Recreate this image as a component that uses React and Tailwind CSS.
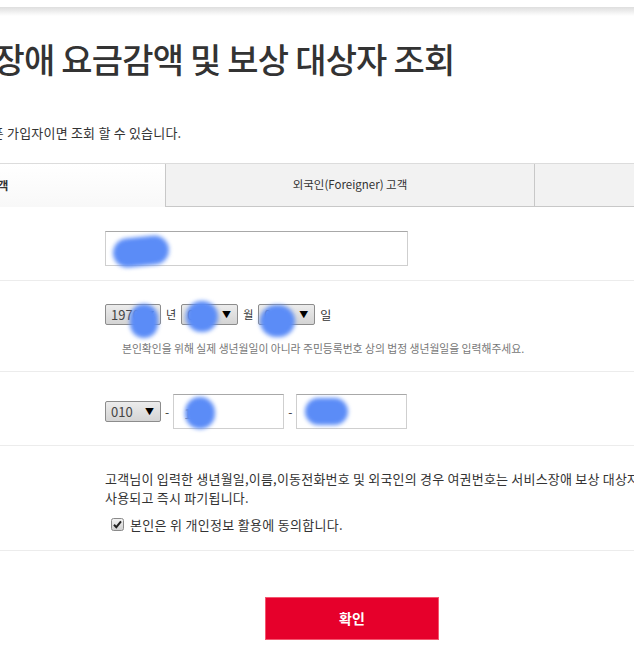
import React from 'react';

const FONT = "font-['Noto_Sans_CJK_KR','Noto_Sans',sans-serif]";

// blurred redaction blob that sits over the field content
function Blob({ className }) {
  return <div className={`absolute bg-[#5b8cf7] blur-[2px] rounded-full ${className}`} />;
}

function Select({ value, width, children }) {
  return (
    <div
      className={`relative flex items-center h-[21px] ${width} border border-[#8c8c8c] rounded-[2px] bg-gradient-to-b from-[#ececec] to-[#d4d4d4] pl-[5px] pr-[6px] text-[13px] text-[#444] leading-none`}
    >
      <span className="flex-1">{value}</span>
      <span className="text-[9px] text-black">▼</span>
      {children}
    </div>
  );
}

function TextInput({ width, children }) {
  return (
    <div
      className={`relative h-[35px] ${width} border border-[#cfcfcf] border-t-[#a8a8a8] bg-white`}
    >
      {children}
    </div>
  );
}

function CheckBox() {
  return (
    <svg width="13" height="13" viewBox="0 0 13 13">
      <defs>
        <linearGradient id="cb" x1="0" y1="0" x2="0" y2="1">
          <stop offset="0" stopColor="#f4f4f4" />
          <stop offset="1" stopColor="#cfcfcf" />
        </linearGradient>
      </defs>
      <rect x="0.5" y="0.5" width="12" height="12" rx="2" fill="url(#cb)" stroke="#8a8a8a" />
      <path d="M3 6.8 L5.3 9.2 L10 3.4" fill="none" stroke="#222" strokeWidth="2" />
    </svg>
  );
}

function Row({ label, className, children }) {
  return (
    <div className={`flex border-b border-[#ececec] ${className}`}>
      <div className="w-[309px] shrink-0 pl-[30px] text-[13px] text-[#333] font-bold">{label}</div>
      <div className="flex-1">{children}</div>
    </div>
  );
}

export default function App() {
  return (
    <div className={`w-[634px] h-[670px] overflow-hidden bg-white ${FONT} text-[#333]`}>
      <div className="h-[7px] bg-white" />
      <div className="h-[9px] bg-gradient-to-b from-[#dedede] to-white" />

      <div className="-ml-[204px] w-[1107px]">
        <h1 className="mt-[23px] ml-[106px] text-[34px] leading-[40px] tracking-[-0.8px] font-medium text-[#333] whitespace-nowrap">
          서비스장애 요금감액 및 보상 대상자 조회
        </h1>

        <p className="mt-[45px] ml-[152px] text-[13px] leading-[17px] tracking-[0.2px] whitespace-nowrap">
          KT 휴대폰 가입자이면 조회 할 수 있습니다.
        </p>

        <div className="mt-[22px] grid grid-cols-3 h-[44px] border-t border-[#dcdcdc] text-[11.5px]">
          <div className="flex items-center justify-center bg-gradient-to-b from-white to-[#f8f8f8] font-bold">
            내국인 고객
          </div>
          <div className="flex items-center justify-center bg-[#f2f2f2] border-l border-b border-[#c8c8c8]">
            외국인(Foreigner) 고객
          </div>
          <div className="flex items-center justify-center bg-[#f2f2f2] border-l border-b border-[#c8c8c8] text-transparent">
            법인 고객
          </div>
        </div>

        <Row label="이름" className="pt-[24px] pb-[14px]">
          <TextInput width="w-[303px]">
            <Blob className="left-[7px] top-[5px] w-[56px] h-[29px] -rotate-6" />
          </TextInput>
        </Row>

        <Row label="생년월일" className="pt-[23px] pb-[16px]">
          <div className="flex items-center gap-[5px] text-[11px]">
            <Select value="1970" width="w-[56px]">
              <Blob className="left-[24px] top-[-1px] w-[28px] h-[34px]" />
            </Select>
            <span>년</span>
            <Select value="01" width="w-[57px]">
              <Blob className="left-[4px] top-[-4px] w-[32px] h-[31px]" />
            </Select>
            <span>월</span>
            <Select value="01" width="w-[57px]">
              <Blob className="left-[1px] top-[0px] w-[35px] h-[32px]" />
            </Select>
            <span className="text-[12px]">일</span>
          </div>
          <p className="mt-[16px] ml-[17px] text-[10.8px] leading-[14px] text-[#777] whitespace-nowrap">
            본인확인을 위해 실제 생년월일이 아니라 주민등록번호 상의 법정 생년월일을 입력해주세요.
          </p>
        </Row>

        <Row label="휴대폰번호" className="pt-[22px] pb-[16px]">
          <div className="flex items-center gap-[4px] text-[12px]">
            <Select value="010" width="w-[56px]" />
            <span>-</span>
            <TextInput width="w-[111px]">
              <span className="absolute left-[10px] top-[9px] text-[13px] text-[#888]">1</span>
              <Blob className="left-[11px] top-[2px] w-[30px] h-[32px]" />
            </TextInput>
            <span>-</span>
            <TextInput width="w-[111px]">
              <Blob className="left-[8px] top-[3px] w-[43px] h-[27px]" />
            </TextInput>
          </div>
        </Row>

        <Row label="개인정보 활용동의" className="pt-[23px] pb-[16px]">
          <p className="text-[13px] leading-[19px] tracking-[0.2px] whitespace-nowrap">
            고객님이 입력한 생년월일,이름,이동전화번호 및 외국인의 경우 여권번호는 서비스장애 보상 대상자 조회 목적으로만
            <br />
            사용되고 즉시 파기됩니다.
          </p>
          <label className="mt-[8px] ml-[6px] flex items-center gap-[6px] text-[13px] leading-[19px] tracking-[0.3px]">
            <CheckBox />
            <span>본인은 위 개인정보 활용에 동의합니다.</span>
          </label>
        </Row>

        <div className="mt-[46px] flex">
          <div className="ml-[469px] w-[174px] h-[43px] flex items-center justify-center bg-[#e6002b] border border-[#f4566f] text-white text-[14px] font-bold">
            확인
          </div>
        </div>
      </div>
    </div>
  );
}
